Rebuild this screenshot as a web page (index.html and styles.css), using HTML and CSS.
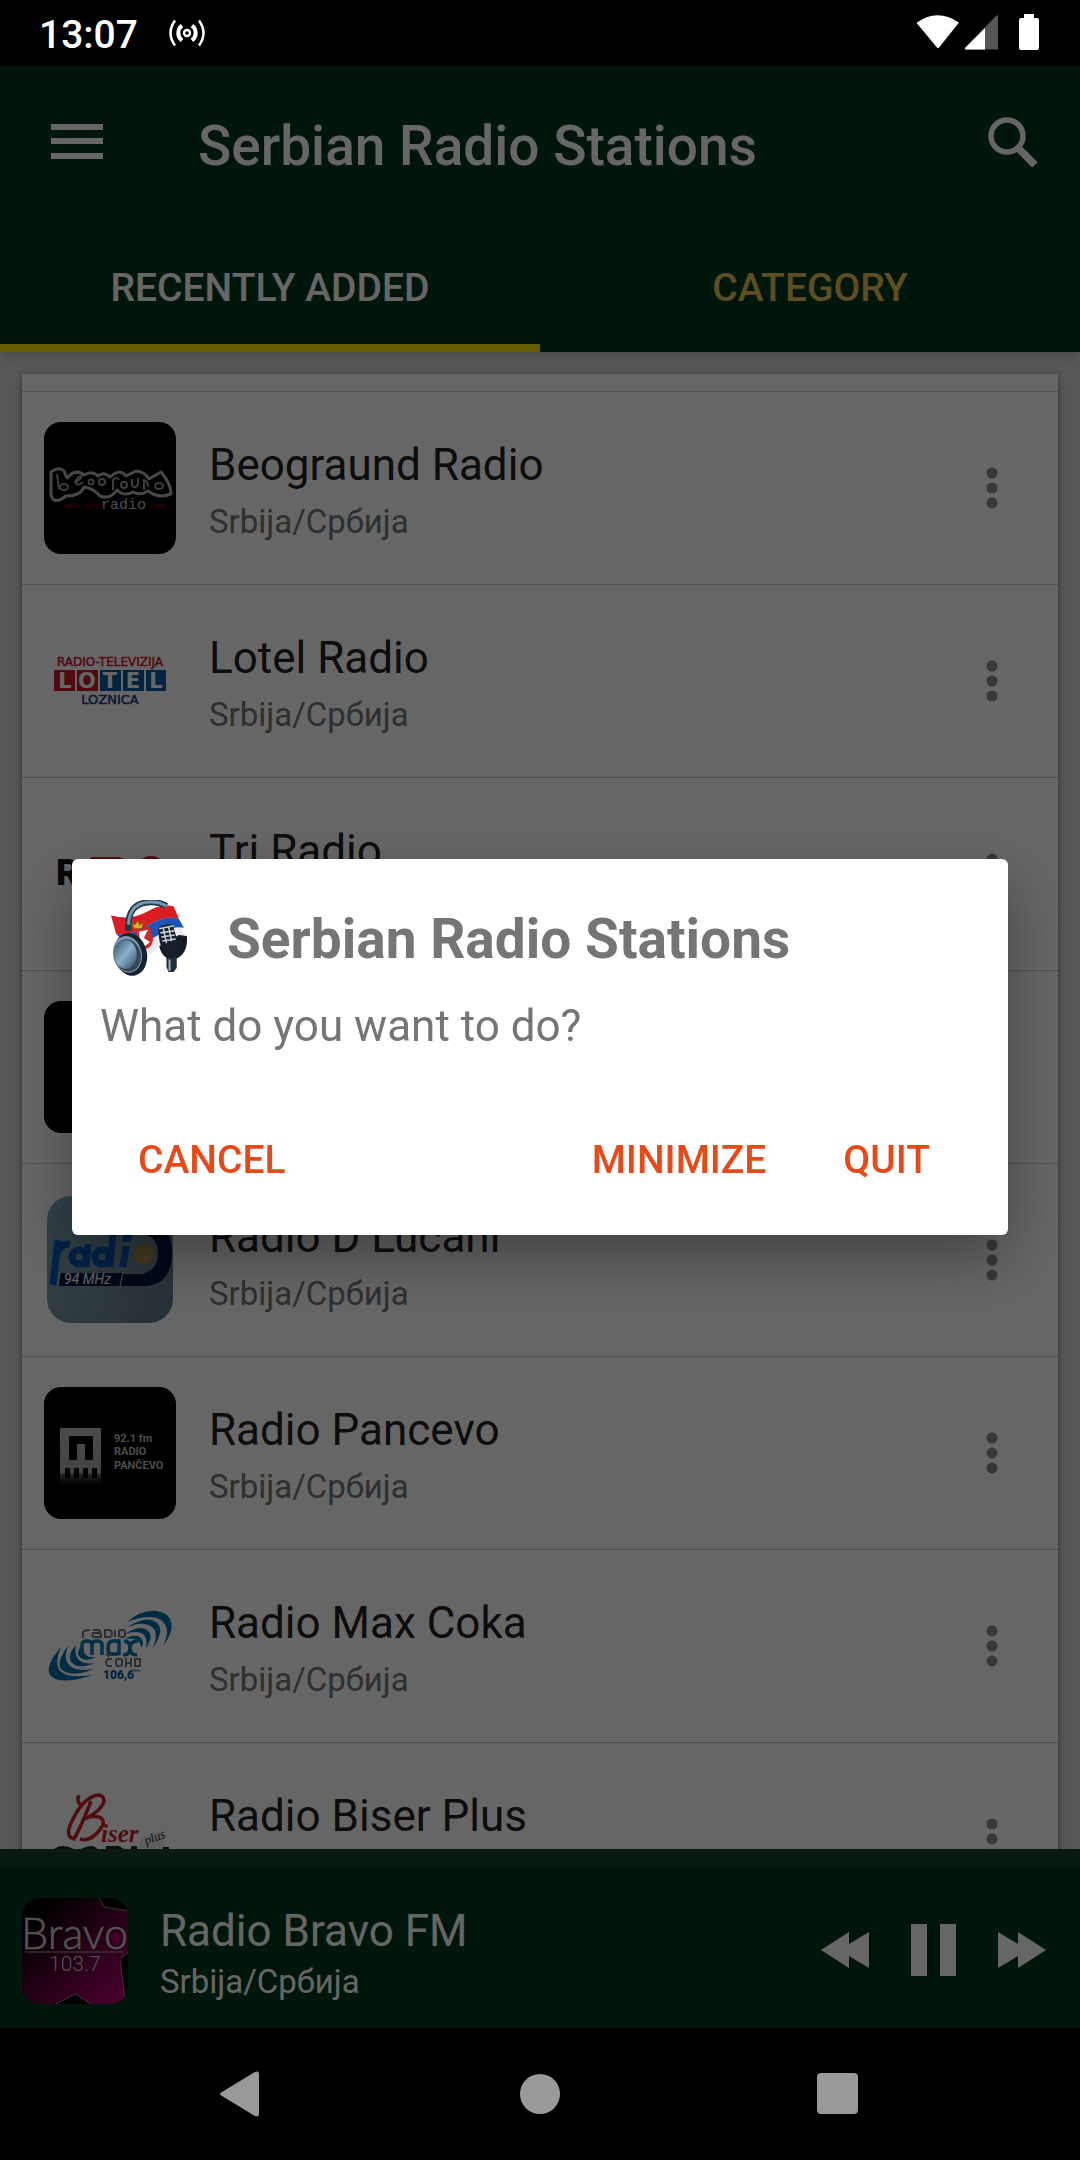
FILE: index.html
```html
<!DOCTYPE html>
<html lang="en">
<head>
<meta charset="utf-8">
<meta name="viewport" content="width=device-width, initial-scale=1">
<title>Serbian Radio Stations</title>
<link rel="stylesheet" href="styles.css">
</head>
<body>
<div class="screen">
  <div class="status">
    <span class="clock">13:07</span>
    <svg class="cast" width="38" height="28" viewBox="0 0 38 28" fill="none" stroke="#fff">
      <circle cx="19" cy="14" r="3" stroke-width="2.4"/>
      <path d="M14 6.500a9.500 9.500 0 0 0 0 15M24 6.500a9.500 9.500 0 0 1 0 15" stroke-width="4"/>
      <path d="M7 1.500Q-2 14 7 26.500M31 1.500Q40 14 31 26.500" stroke-width="2.500"/>
    </svg>
    <svg class="signals" width="124" height="38" viewBox="0 0 124 38">
      <path d="M1 8.500Q21-6 43 8.500L23.500 33Q22 35 20.500 33L1.500 10Q.5 9 1 8.500Z" fill="#fff"/>
      <path d="M82 2.500V35.500H50Q47.500 35.500 50 33L79 3Q82 0 82 2.500Z" fill="#555"/>
      <path d="M69 14V35.500H50Q47.500 35.500 50 33Z" fill="#fff"/>
      <path d="M108 0h10v4h3q2 0 2 2v28q0 2-2 2h-16q-2 0-2-2V6q0-2 2-2h3Z" fill="#fff"/>
    </svg>
  </div>

  <header class="header">
    <div class="toolbar">
      <button class="icon-btn" aria-label="Menu">
        <svg width="52" height="36" viewBox="0 0 52 36" fill="#fff"><path d="M0 0h52v6H0zM0 14h52v6H0zM0 29h52v6H0z"/></svg>
      </button>
      <h1 class="title">Serbian Radio Stations</h1>
      <button class="icon-btn" aria-label="Search">
        <svg width="50" height="50" viewBox="0 0 50 50" fill="none" stroke="#fff"><circle cx="19" cy="19" r="16" stroke-width="5.500"/><path d="M30 31L47 48" stroke-width="7.500"/></svg>
      </button>
    </div>
    <nav class="tabs">
      <button class="tab tab-active">RECENTLY ADDED</button>
      <button class="tab">CATEGORY</button>
    </nav>
  </header>

  <main class="content">
    <ul class="card">
      <li class="row">
        <svg class="logo" viewBox="0 0 132 132">
          <rect width="132" height="132" rx="17" fill="#000"/>
          <path d="M7 50Q15 44 20 49L23 56Q32 46 40 53Q48 48 54 54Q60 49 66 55Q76 46 82 54L92 49Q101 50 105 57L117 50Q127 62 127 72Q115 77 104 69Q96 74 89 70Q80 75 73 68Q66 78 56 74Q49 66 40 65Q37 74 22 74Q9 84 7 72Z" fill="#000" stroke="#b4b4b4" stroke-width="3" stroke-linejoin="round"/>
          <g fill="none" stroke="#999" stroke-width="2"><path d="M13 52l2 15"/><ellipse cx="20" cy="65" rx="4" ry="3"/><path d="M31 61q8-6 6-7t-6 6q2 5 8 0"/><circle cx="47" cy="60" r="2.500"/><circle cx="58" cy="60" r="3"/><path d="M69 68V58q3-4 6 0"/><circle cx="80" cy="63" r="3"/><path d="M88 57v6q3 5 6-1v-6M100 68V58q4 1 4 7"/><ellipse cx="115" cy="64" rx="4" ry="3"/></g>
          <text x="57" y="87" class="mono" font-size="15" fill="#bbb">radio</text>
          <text x="21" y="86" class="mono" font-size="8" fill="#a00018">www.the</text>
          <text x="105" y="86" class="mono" font-size="7" fill="#a00018">.net</text>
        </svg>
        <div class="info"><h2 class="name">Beograund Radio</h2><p class="place">Srbija/Србија</p></div>
        <button class="more" aria-label="More options"><svg width="12" height="42" viewBox="0 0 12 42"><circle cx="6" cy="6" r="5.500"/><circle cx="6" cy="21" r="5.500"/><circle cx="6" cy="36" r="5.500"/></svg></button>
      </li>
      <li class="row">
        <svg class="logo" viewBox="0 0 132 132">
          <text x="66" y="51" class="wide" text-anchor="middle" font-size="12" fill="#c8202b" stroke="#c8202b" stroke-width=".5">RADIO-TELEVIZIJA</text>
          <path d="M10 55h21v21H10zM33 55h21v21H33z" fill="#c51c22"/>
          <path d="M56 55h21v21H56zM79 55h21v21H79zM102 55h20v21h-20z" fill="#075aa4"/>
          <g class="wide" font-size="21" font-weight="700" fill="#fff" text-anchor="middle"><text x="21" y="73">L</text><text x="43" y="73">O</text><text x="66" y="73">T</text><text x="89" y="73">E</text><text x="112" y="73">L</text></g>
          <text x="66" y="89" class="wide" text-anchor="middle" font-size="13" fill="#203c78" stroke="#203c78" stroke-width=".5">LOZNICA</text>
        </svg>
        <div class="info"><h2 class="name">Lotel Radio</h2><p class="place">Srbija/Србија</p></div>
        <button class="more" aria-label="More options"><svg width="12" height="42" viewBox="0 0 12 42"><circle cx="6" cy="6" r="5.500"/><circle cx="6" cy="21" r="5.500"/><circle cx="6" cy="36" r="5.500"/></svg></button>
      </li>
      <li class="row">
        <svg class="logo" viewBox="0 0 132 132">
          <text x="12" y="77" font-size="36" font-weight="900" fill="#111">R</text>
          <path d="M44 52l4-3h27l12 5H44z" fill="#d02030"/>
          <circle cx="107" cy="63" r="15" fill="#d01424"/>
        </svg>
        <div class="info"><h2 class="name">Tri Radio</h2><p class="place">Srbija/Србија</p></div>
        <button class="more" aria-label="More options"><svg width="12" height="42" viewBox="0 0 12 42"><circle cx="6" cy="6" r="5.500"/><circle cx="6" cy="21" r="5.500"/><circle cx="6" cy="36" r="5.500"/></svg></button>
      </li>
      <li class="row row-blank">
        <svg class="logo" viewBox="0 0 132 132"><rect width="132" height="132" rx="17" fill="#000"/></svg>
        <button class="more" aria-label="More options"><svg width="12" height="42" viewBox="0 0 12 42"><circle cx="6" cy="6" r="5.500"/><circle cx="6" cy="21" r="5.500"/><circle cx="6" cy="36" r="5.500"/></svg></button>
      </li>
      <li class="row">
        <svg class="logo" viewBox="0 0 132 132">
          <defs><linearGradient id="sky" x1="0" y1="0" x2="1" y2="1"><stop offset="0" stop-color="#7ba6b9"/><stop offset=".5" stop-color="#7896a3"/><stop offset="1" stop-color="#607580"/></linearGradient></defs>
          <rect x="3" y="2" width="126" height="127" rx="24" fill="url(#sky)"/>
          <path d="M86 41h16q12 3 12 19t-16 20H79v12h24q25-3 25-33T102 28H80Z" fill="#03143f"/>
          <path d="M16 79h63v13H14z" fill="#03143f"/>
          <circle cx="99" cy="60" r="10" fill="#ac994e"/>
          <g fill="none" stroke="#0756b6" stroke-width="7"><path d="M9 91L14 46M13 59Q17 49 26 50M44 50L42 73"/><circle cx="35" cy="63" r="7"/><circle cx="58" cy="63" r="7"/><path d="M69 40L66 73M82 52L79 73"/></g><path d="M79 41h9l-1 7h-9z" fill="#0756b6"/>
          <text x="20" y="90" font-size="14" font-style="italic" fill="#fff">94 MHz</text><path d="M79 78l-3 14M16 79l-2 13" stroke="#ccc"/>
        </svg>
        <div class="info"><h2 class="name">Radio D Lucani</h2><p class="place">Srbija/Србија</p></div>
        <button class="more" aria-label="More options"><svg width="12" height="42" viewBox="0 0 12 42"><circle cx="6" cy="6" r="5.500"/><circle cx="6" cy="21" r="5.500"/><circle cx="6" cy="36" r="5.500"/></svg></button>
      </li>
      <li class="row">
        <svg class="logo" viewBox="0 0 132 132">
          <defs><linearGradient id="fade" x1="0" y1="0" x2="0" y2="1"><stop offset="0" stop-color="#bbb"/><stop offset=".78" stop-color="#aaa"/><stop offset=".82" stop-color="#555"/><stop offset="1" stop-color="#000"/></linearGradient></defs>
          <rect width="132" height="132" rx="17" fill="#000"/>
          <path d="M16 41h41v57H16z" fill="url(#fade)"/>
          <path d="M25 49h24v24h-8V57h-8v16h-8zM21 81h5v10h-5zM30 81h5v10h-5zM39 81h5v10h-5zM48 81h5v10h-5z" fill="#000"/>
          <g font-size="11" font-weight="700" fill="#bbb"><text x="70" y="55">92.1 fm</text><text x="70" y="68">RADIO</text><text x="70" y="82">PANČEVO</text></g>
        </svg>
        <div class="info"><h2 class="name">Radio Pancevo</h2><p class="place">Srbija/Србија</p></div>
        <button class="more" aria-label="More options"><svg width="12" height="42" viewBox="0 0 12 42"><circle cx="6" cy="6" r="5.500"/><circle cx="6" cy="21" r="5.500"/><circle cx="6" cy="36" r="5.500"/></svg></button>
      </li>
      <li class="row">
        <svg class="logo" viewBox="0 0 132 132">
          <g fill="#006fa8"><path d="M83 42Q105 24 123 35Q134 46 119 66Q128 48 117 40Q106 33 83 42Z"/><path d="M82 48Q103 34 113 43Q121 50 109 68Q115 52 108 47Q98 40 82 48Z"/><path d="M81 54Q97 44 104 51Q110 56 102 68Q104 58 99 54Q93 50 81 54Z"/><path d="M81 59Q92 53 97 58Q101 62 97 68Q97 63 93 60Q90 58 81 59Z"/>
          <path d="M17 67Q1 85 6 95Q15 106 49 95Q24 99 16 91Q10 83 17 67Z"/><path d="M24 66Q12 82 17 89Q27 98 50 89Q31 92 25 85Q19 79 24 66Z"/><path d="M32 65Q23 75 27 82Q34 90 51 83Q39 85 34 79Q30 74 32 65Z"/><path d="M38 65Q32 72 35 76Q41 83 52 77Q44 78 41 74Q38 70 38 65Z"/></g>
          <g fill="none" stroke="#747474" stroke-width="2"><path d="M39 58v-5q0-3 7-3M49 50h5q3 0 3 7h-6q-4 0-2-4h8M61 50v7h5q4-3 0-7zM71 50v7"/><rect x="75" y="50" width="6" height="7" rx="2"/></g>
          <g fill="none" stroke="#0075ae" stroke-width="3.500"><path d="M38 75V65q0-4 5-4t5 4v10M48 65q0-4 5-4t5 4v10M75 75V61h-6q-5 0-5 7t5 6h6M80 61q6 0 6 7t7 7M94 61q-8 0-8 7t-7 7"/></g>
          <g fill="none" stroke="#777" stroke-width="2"><path d="M68 79h-4q-4 4 0 7h4M62 74l3 2 3-2"/><rect x="72" y="79" width="6" height="7" rx="2"/><path d="M82 78v9M87 78v9M82 83h5M96 87v-8h-5v7h5"/></g>
          <text x="59" y="99" font-size="12" font-weight="900" fill="#075c9c">106,6</text><text x="88" y="92" font-size="4" fill="#075c9c">MHz</text>
        </svg>
        <div class="info"><h2 class="name">Radio Max Coka</h2><p class="place">Srbija/Србија</p></div>
        <button class="more" aria-label="More options"><svg width="12" height="42" viewBox="0 0 12 42"><circle cx="6" cy="6" r="5.500"/><circle cx="6" cy="21" r="5.500"/><circle cx="6" cy="36" r="5.500"/></svg></button>
      </li>
      <li class="row">
        <svg class="logo" viewBox="0 0 132 132">
          <path d="M35 20q-3 5 2 11M47 26Q37 52 30 64Q21 62 27 48Q40 20 56 20Q66 25 51 38Q40 45 41 43Q61 38 59 50Q48 68 36 64" transform="translate(0 2)" fill="none" stroke="#c71f27" stroke-width="3.500"/>
          <text x="57" y="69" class="script" font-size="25" font-weight="700" fill="#c71f27">iser</text>
          <path d="M98 64l21-7 1 18H94z" fill="#eaeaea"/>
          <text x="102" y="72" class="script" font-size="13" fill="#333" transform="rotate(-20 102 72)">plus</text>
          <path d="M10 76q8-6 20 0zM37 76q12-6 16 0zM62 73h13l5 3H62zM87 73h6v3h-6zM119 74h6v2h-6z" fill="#222"/>
        </svg>
        <div class="info"><h2 class="name">Radio Biser Plus</h2></div>
        <button class="more" aria-label="More options"><svg width="12" height="42" viewBox="0 0 12 42"><circle cx="6" cy="6" r="5.500"/><circle cx="6" cy="21" r="5.500"/><circle cx="6" cy="36" r="5.500"/></svg></button>
      </li>
    </ul>
  </main>

  <footer class="player">
    <svg class="cover" viewBox="0 0 106 106">
      <defs><linearGradient id="magenta" x1="0" y1="0" x2="1" y2="1"><stop offset=".15" stop-color="#000"/><stop offset=".55" stop-color="#600039"/><stop offset="1" stop-color="#c1007a"/></linearGradient><clipPath id="round"><rect width="106" height="106" rx="18"/></clipPath></defs>
      <g clip-path="url(#round)"><rect width="106" height="106" fill="url(#magenta)"/>
      <path d="M76-2L82 9L108 13V-2ZM108 53L98 61L103 100L108 100ZM30 108L53 96L72 108Z" fill="#000" stroke="#bbb" stroke-width=".7"/>
      <text x="-1" y="51" class="round-face" font-size="43" fill="#ccc" stroke="#ccc" stroke-width=".6">Bravo</text>
      <circle cx="94" cy="40" r="5" fill="#b0006b"/><path d="M3 54h99" stroke="#aaa"/>
      <text x="27" y="73" font-size="21" font-weight="300" fill="#ccc">103.7</text></g>
    </svg>
    <div class="info"><h2 class="name name-light">Radio Bravo FM</h2><p class="place name-light">Srbija/Србија</p></div>
    <div class="controls">
      <button class="icon-btn" aria-label="Previous"><svg width="48" height="36" viewBox="0 0 48 36" fill="#fff"><path d="M0 18L28 0V12L48 0V36L28 24V36Z"/></svg></button>
      <button class="icon-btn" aria-label="Pause"><svg width="45" height="52" viewBox="0 0 45 52" fill="#fff"><path d="M0 0h16v52H0zM29 0h16v52H29z"/></svg></button>
      <button class="icon-btn" aria-label="Next"><svg width="48" height="36" viewBox="0 0 48 36" fill="#fff"><path d="M48 18L20 0V12L0 0V36L20 24V36Z"/></svg></button>
    </div>
  </footer>

  <nav class="navbar">
    <button class="icon-btn" aria-label="Back"><svg width="46" height="46" viewBox="0 0 46 46" fill="#999"><path d="M3 21L35 1.500Q40 -1 40 3V43Q40 47 35 44.500L3 25Q-1 23 3 21Z"/></svg></button>
    <button class="icon-btn" aria-label="Home"><svg width="46" height="46" viewBox="0 0 46 46" fill="#999"><circle cx="23" cy="23" r="20"/></svg></button>
    <button class="icon-btn" aria-label="Recent apps"><svg width="46" height="46" viewBox="0 0 46 46" fill="#999"><rect x="2" y="2" width="41" height="41" rx="4"/></svg></button>
  </nav>
</div>

<div class="scrim">
  <section class="dialog" role="dialog" aria-labelledby="dialog-title">
    <div class="dialog-head">
      <svg width="76" height="76" viewBox="0 0 74 74">
        <defs><linearGradient id="steel" x1="0" y1="0" x2="1" y2="1"><stop offset="0" stop-color="#334d61"/><stop offset=".5" stop-color="#8bb0cb"/><stop offset="1" stop-color="#30485b"/></linearGradient></defs>
        <path d="M0 15Q20 20 34 12Q48 3 61 6L73 39Q58 34 47 45Q37 56 23 57L10 37Z" fill="#e8ebf0"/>
        <path d="M0 15Q20 20 34 12Q48 3 61 6L66 18Q52 15 39 23Q22 35 5 33Z" fill="#dc1c23"/>
        <path d="M5 33Q22 35 39 23Q52 15 66 18L71 27Q57 25 46 34Q29 46 10 38Z" fill="#1b55b7"/>
        <path d="M24 28l14-2 3 12q-1 9-8 10-9-4-9-20z" fill="#cf2930"/><path d="M27 31l9-2-4 8 6 4-5 4-5-7z" fill="#fff"/><path d="M20 21l3 3 3-4 2 4 4-3-2 7h-8z" fill="#eea52c" stroke="#8a5010"/>
        <path d="M17 30Q15 2 39 2Q48 2 54 6" fill="none" stroke="#233847" stroke-width="6"/><path d="M17 24Q18 2 39 2Q48 2 54 6" fill="none" stroke="#7297b2" stroke-width="3"/>
        <ellipse cx="19" cy="53" rx="16" ry="21" transform="rotate(-12 19 53)" fill="#17232e"/><ellipse cx="16" cy="53" rx="14" ry="18" transform="rotate(-12 16 53)" fill="#7d98ac"/><ellipse cx="16" cy="54" rx="13" ry="16" transform="rotate(-12 16 54)" fill="#31495b"/><ellipse cx="14" cy="53" rx="11" ry="14" fill="url(#steel)"/>
        <path d="M47 45q3 13 14 13 14-4 13-23l-8-1" fill="#151c24"/><path d="M46 28q4-6 14-4l7 23q-6 7-14 4-6-3-7-23z" fill="#17202a"/>
        <path d="M47 28l14-3M48 32l14-2M49 36l13-2M50 40l13-2M51 28l3 14M56 26l3 14" stroke="#c7cdd1" stroke-width="1.500"/>
        <path d="M54 56h10v10l-3 4h-5l-2-5z" fill="#202d39"/><path d="M57 58v11" stroke="#9ab" stroke-width="2"/>
      </svg>
      <h2 class="dialog-title" id="dialog-title">Serbian Radio Stations</h2>
    </div>
    <p class="message">What do you want to do?</p>
    <div class="actions">
      <button class="action action-first">CANCEL</button>
      <button class="action">MINIMIZE</button>
      <button class="action">QUIT</button>
    </div>
  </section>
</div>
</body>
</html>
```
FILE: styles.css
```css
* { box-sizing: border-box; }
body { margin: 0; background: #000; font-family: Roboto, "Noto Sans", sans-serif; }
h1, h2, p, ul { margin: 0; padding: 0; }
button { margin: 0; padding: 0; border: 0; background: none; font-family: inherit; cursor: pointer; }
svg { display: block; flex: none; }

.screen { display: flex; flex-direction: column; height: 100vh; overflow: hidden; }

.status { position: relative; z-index: 2; display: flex; align-items: center; height: 66px; flex: none; padding: 0 40px 0 39px; background: #000; color: #fff; }
.clock { font-size: 39px; line-height: 46px; font-weight: 500; padding-top: 4px; }
.cast { margin-left: 30px; }
.signals { margin-left: auto; }

.header { position: relative; z-index: 1; flex: none; background: #02391c; box-shadow: 0 6px 12px rgba(0, 0, 0, .12); }
.toolbar { display: flex; align-items: center; height: 154px; padding: 0 42px 2px 51px; }
.title { flex: 1; margin-left: 95px; padding-top: 8px; font-size: 55px; line-height: 64px; font-weight: 500; color: #fff; }
.tabs { display: grid; grid-template-columns: 1fr 1fr; }
.tab { padding: 46px 0 34px; border-bottom: 8px solid transparent; font-size: 39px; line-height: 44px; font-weight: 500; color: #e5c055; }
.tab-active { border-color: #ffe500; color: #fff; }

.content { flex: 1; min-height: 0; overflow: hidden; padding: 22px 22px 0; background: #dcdada; }
.card { padding-top: 17px; list-style: none; background: #fff; box-shadow: 0 2px 8px rgba(0, 0, 0, .45); }
.row { display: flex; align-items: center; padding: 30px 60px 30px 22px; border-top: 1px solid #c8c8c8; }
.row-blank { justify-content: space-between; }
.row:last-child { align-items: flex-start; }
.row:last-child .info { padding-top: 17px; }
.row:last-child .more { padding-top: 45px; }
.logo { width: 132px; height: 132px; }
.info { flex: 1; min-width: 0; padding: 4px 0 0 33px; }
.name { font-size: 44px; line-height: 52px; font-weight: 400; color: #212121; }
.place { margin-top: 11px; font-size: 33px; line-height: 39px; color: #757575; }
.more { fill: #8c8c8c; }
.mono { font-family: "Liberation Mono", monospace; }
.wide { font-family: "DejaVu Sans", sans-serif; }
.script { font-family: "Liberation Serif", serif; font-style: italic; }
.round-face { font-family: Lato, sans-serif; font-weight: 300; }

.player { position: relative; display: flex; align-items: center; flex: none; padding: 49px 34px 24px 22px; background: linear-gradient(#1f452f, #02391c 24px); }
.cover { width: 106px; height: 106px; }
.player .info { padding: 4px 0 0 32px; }
.player .place { margin-top: 5px; }
.name-light, .player .name-light { color: #fff; }
.controls { display: flex; align-items: center; gap: 42px; padding-bottom: 2px; }

.navbar { position: relative; z-index: 2; display: flex; align-items: center; justify-content: center; gap: 252px; height: 132px; flex: none; background: #000; }

.scrim { position: fixed; inset: 0; z-index: 1; display: flex; align-items: center; padding: 66px 72px 132px; background: rgba(0, 0, 0, .6); }
.dialog { flex: 1; padding: 41px 0 53px; border-radius: 6px; background: #fff; box-shadow: 0 24px 60px rgba(0, 0, 0, .35); }
.dialog-head { display: flex; align-items: center; gap: 40px; padding: 0 39px; }
.dialog-title { padding-top: 2px; font-size: 55px; line-height: 64px; font-weight: 700; color: #757575; }
.message { margin-top: 24px; padding: 0 28px; font-size: 44px; line-height: 52px; color: #757575; }
.actions { display: flex; gap: 77px; margin-top: 86px; padding: 0 78px 0 66px; }
.action { font-size: 39px; line-height: 44px; font-weight: 500; color: #e64a19; }
.action-first { margin-right: auto; }
```
